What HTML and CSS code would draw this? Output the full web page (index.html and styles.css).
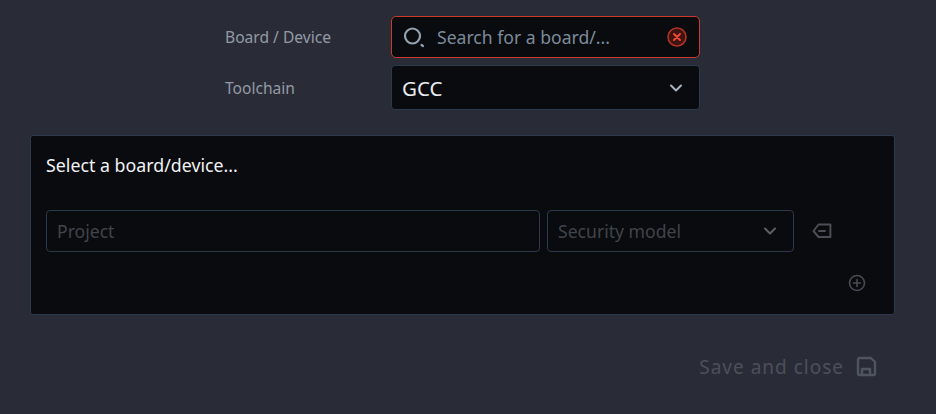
FILE: index.html
```html
<!DOCTYPE html>
<html lang="en">
<head>
    <meta charset="UTF-8">
    <title>Project settings</title>
    <link rel="stylesheet" href="styles.css">
</head>
<body>
    <div class="top-form">
        <label class="field-label">Board / Device</label>
        <div class="input-box search-box error">
            <svg width="24" height="24" viewBox="0 0 24 24" fill="none" stroke="#94a1af" stroke-width="2.200"><circle cx="10.500" cy="11" r="7.500"/><path d="M19.500 20l1.500 1" stroke-linecap="round"/></svg>
            <span class="search-text">Search for a board/...</span>
            <svg width="22" height="22" viewBox="0 0 22 22" fill="none"><circle cx="11" cy="11" r="9" fill="#3f1310" stroke="#b03327" stroke-width="1.600"/><path d="M8 8l6 6M14 8l-6 6" stroke="#f0483a" stroke-width="2" stroke-linecap="round"/></svg>
        </div>
        <label class="field-label">Toolchain</label>
        <div class="input-box toolchain-box">
            <span class="value">GCC</span>
            <svg width="16" height="16" viewBox="0 0 16 16" fill="none" stroke="#a9b4c0" stroke-width="2" stroke-linecap="round" stroke-linejoin="round"><path d="M3 5.500l5 5 5-5"/></svg>
        </div>
    </div>

    <div class="panel">
        <div class="panel-title">Select a board/device...</div>
        <div class="project-row">
            <div class="input-box project-box"><span class="placeholder">Project</span></div>
            <div class="input-box security-box">
                <span class="placeholder">Security model</span>
                <svg width="16" height="16" viewBox="0 0 16 16" fill="none" stroke="#5b6068" stroke-width="2" stroke-linecap="round" stroke-linejoin="round"><path d="M3 5.500l5 5 5-5"/></svg>
            </div>
            <svg class="remove-icon" width="22" height="22" viewBox="0 0 22 22" fill="none" stroke="#4a4e56" stroke-width="2" stroke-linejoin="round"><path d="M20.400 4.500V17H8.500L3.500 11l5-6.500z"/><path d="M9 11h6" stroke-linecap="round"/></svg>
        </div>
        <div class="add-row">
            <svg width="20" height="20" viewBox="0 0 20 20" fill="none" stroke="#474b53" stroke-width="1.600" stroke-linecap="round"><circle cx="10" cy="10" r="7.500"/><path d="M10 6.500v7M6.500 10h7"/></svg>
        </div>
    </div>

    <div class="actions">
        <span class="save-text">Save and close</span>
        <svg width="22" height="22" viewBox="0 0 22 22" fill="none" stroke="#50545f" stroke-width="2.400" stroke-linejoin="round"><path d="M4.500 2H16l4 4v11.500a1.500 1.500 0 0 1-1.500 1.500h-14A1.500 1.500 0 0 1 3 17.500v-14A1.500 1.500 0 0 1 4.500 2z"/><path d="M7 19v-6h8v6"/></svg>
    </div>
</body>
</html>
```

FILE: styles.css
```css
body {
    margin: 0;
    height: 414px;
    overflow: hidden;
    background-color: #292c37;
    font-family: "Noto Sans", sans-serif;
}

svg {
    flex-shrink: 0;
}

.top-form {
    display: grid;
    grid-template-columns: 166px 309px;
    grid-template-rows: 42px 45px;
    row-gap: 7px;
    align-items: center;
    margin-left: 225px;
    padding-top: 16px;
}

.field-label {
    font-size: 15.600px;
    color: #949aa5;
}

.input-box {
    display: flex;
    align-items: center;
    box-sizing: border-box;
    height: 100%;
    border: 1px solid #2c3a4d;
    border-radius: 4px;
    background-color: #090b0e;
}

.search-box {
    padding: 0 11px 0 10px;
}

.error {
    border: 1.500px solid #c93a2d;
    border-radius: 5px;
}

.search-text {
    flex: 1;
    margin-left: 11px;
    font-size: 17.600px;
    color: #7d8b9b;
}

.toolchain-box {
    justify-content: space-between;
    padding: 0 15px 0 10px;
}

.value {
    font-size: 20.500px;
    color: #e8edf2;
}

.panel {
    box-sizing: border-box;
    height: 180px;
    margin: 25px 41px 0 30px;
    padding: 17px 15px 0;
    border: 1px solid #2c3a4d;
    border-radius: 3px;
    background-color: #090b0e;
}

.panel-title {
    height: 24px;
    font-size: 17.800px;
    line-height: 24px;
    color: #f0f2f5;
}

.project-row {
    display: flex;
    align-items: center;
    gap: 7px;
    height: 42px;
    margin-top: 33px;
}

.project-box {
    width: 494px;
    padding: 0 10px;
}

.security-box {
    justify-content: space-between;
    width: 247px;
    padding: 0 15px 0 10px;
}

.placeholder {
    font-size: 17.600px;
    color: #40444b;
}

.remove-icon {
    margin-left: 9px;
}

.add-row {
    display: flex;
    justify-content: flex-end;
    margin-top: 21px;
    padding-right: 12px;
}

.actions {
    display: flex;
    justify-content: flex-end;
    align-items: center;
    gap: 11px;
    margin-top: 39px;
    padding-right: 59px;
    color: #4c505b;
}

.save-text {
    font-size: 19px;
    letter-spacing: 1px;
}
```
